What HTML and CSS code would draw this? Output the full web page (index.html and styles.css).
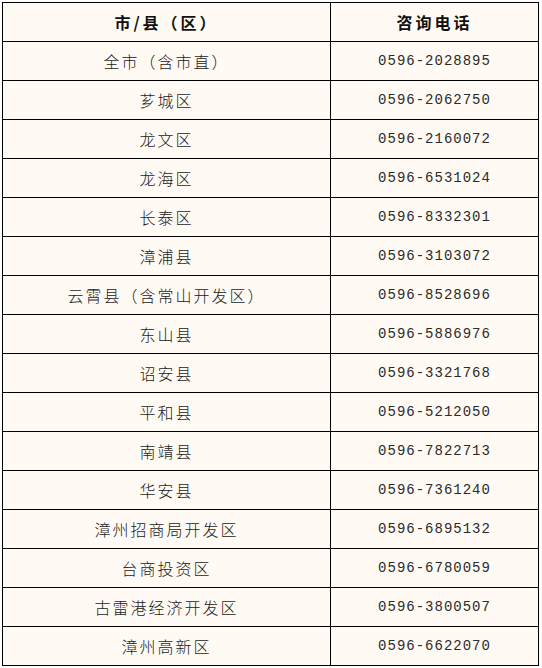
FILE: index.html
```html
<!DOCTYPE html>
<html lang="zh-CN">
<head>
<meta charset="utf-8">
<title>咨询电话</title>
<link rel="stylesheet" href="styles.css">
</head>
<body>
<div class="wrap">
  <div class="grid">
    <div class="cell head">市/县（区）</div>
    <div class="cell head">咨询电话</div>
    <div class="cell">全市（含市直）</div><div class="cell num">0596-2028895</div>
    <div class="cell">芗城区</div><div class="cell num">0596-2062750</div>
    <div class="cell">龙文区</div><div class="cell num">0596-2160072</div>
    <div class="cell">龙海区</div><div class="cell num">0596-6531024</div>
    <div class="cell">长泰区</div><div class="cell num">0596-8332301</div>
    <div class="cell">漳浦县</div><div class="cell num">0596-3103072</div>
    <div class="cell">云霄县（含常山开发区）</div><div class="cell num">0596-8528696</div>
    <div class="cell">东山县</div><div class="cell num">0596-5886976</div>
    <div class="cell">诏安县</div><div class="cell num">0596-3321768</div>
    <div class="cell">平和县</div><div class="cell num">0596-5212050</div>
    <div class="cell">南靖县</div><div class="cell num">0596-7822713</div>
    <div class="cell">华安县</div><div class="cell num">0596-7361240</div>
    <div class="cell">漳州招商局开发区</div><div class="cell num">0596-6895132</div>
    <div class="cell">台商投资区</div><div class="cell num">0596-6780059</div>
    <div class="cell">古雷港经济开发区</div><div class="cell num">0596-3800507</div>
    <div class="cell">漳州高新区</div><div class="cell num">0596-6622070</div>
  </div>
</div>
</body>
</html>
```
FILE: styles.css
```css
html, body {
  margin: 0;
  padding: 0;
  background: #ffffff;
}
.wrap {
  padding: 2px 0 0 2px;
}
.grid {
  display: grid;
  grid-template-columns: 327px 207px;
  grid-auto-rows: 38px;
  gap: 1px;
  padding: 1px;
  width: 535px;
  background: #000000;
}
.cell {
  background: #fffaf4;
  display: flex;
  align-items: center;
  justify-content: center;
  font-family: "Noto Sans CJK SC", "Noto Sans", sans-serif;
  font-size: 16px;
  font-weight: 300;
  letter-spacing: 2px;
  color: #1a1a1a;
  line-height: 1;
}
.head {
  font-weight: bold;
  letter-spacing: 3px;
  color: #111111;
}
.num {
  font-family: "Liberation Mono", "DejaVu Sans Mono", monospace;
  font-size: 14px;
  font-weight: normal;
  letter-spacing: 1px;
  color: #2a2a2a;
}
```
